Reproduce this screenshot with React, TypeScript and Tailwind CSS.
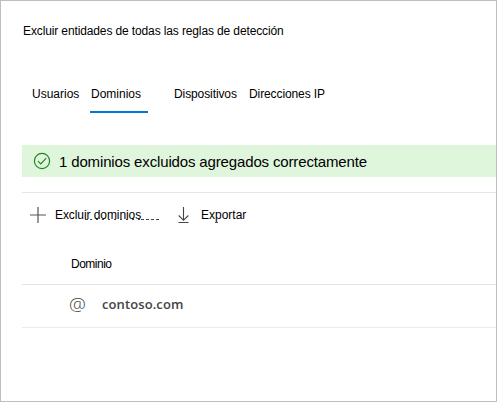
export default function App() {
  return (
    <main className="flex h-[402px] w-[497px] flex-col border border-[#bebebe] bg-white pl-[21px] font-['Liberation_Sans',Arial,sans-serif] text-[12px] leading-4 text-black">
      <h1 className="mt-[22px] h-4 whitespace-nowrap pl-px tracking-[-0.125px]">Excluir entidades de todas las reglas de detección</h1>

      <nav className="mt-[47px] flex h-[27px] whitespace-nowrap">
        <a className="ml-[10px] w-[58px]">Usuarios</a>
        <a className="w-[58px] border-b-2 border-[#0078d4] pl-px">Dominios</a>
        <a className="ml-[26px] w-[75px] tracking-[-0.1px]">Dispositivos</a>
        <a className="tracking-[-0.1px]">Direcciones IP</a>
      </nav>

      <div className="mt-8 flex h-8 shrink-0 items-center bg-[#dff6dd] pl-[11px] text-[15px]">
        <svg className="mr-[8px] size-[18px]" viewBox="0 0 18 18" fill="none" stroke="#218721" strokeWidth="1.2">
          <circle cx="9" cy="9" r="7.6" />
          <path d="M5 9.2 7.8 12 13.2 6.2" />
        </svg>
        <span className="whitespace-nowrap pt-px tracking-[-0.145px]">1 dominios excluidos agregados correctamente</span>
      </div>

      <div className="mt-[15px] flex h-[46px] shrink-0 items-center border-t border-[#e5e5e5] pb-0.5 pl-2">
        <svg className="mr-[9px] size-4" viewBox="0 0 16 16" fill="none" stroke="#555" strokeWidth="1.2">
          <path d="M0 8h16M8 0v16" />
        </svg>
        <span className="relative w-[123px] whitespace-nowrap tracking-[-0.08px]">
          Excluir dominios
          <svg className="absolute left-0 top-0 h-4 w-[108px]" viewBox="0 0 108 16" stroke="#444">
            <path d="M30 12.5h5M86 12.5h19" strokeDasharray="3 2" />
            <path d="M35 12.5h50" strokeDasharray="2 4" />
          </svg>
        </span>
        <svg className="mr-3 h-4 w-[11px]" viewBox="0 0 11 16" fill="none" stroke="#444" strokeWidth="1.1">
          <path d="M5.5 0v13M.7 8.5l4.8 4.8 4.8-4.8M.5 15.5h10" />
        </svg>
        <span className="relative">
          Exportar
          <i className="absolute bottom-0 left-[14px] h-px w-[3px] bg-[#555]" />
        </span>
      </div>

      <div className="flex h-[47px] shrink-0 items-center border-b border-[#e5e5e5] pl-[49px] pt-1.5 text-[12px] tracking-[-0.5px]">Dominio</div>
      <div className="flex h-[43px] shrink-0 items-center border-b border-[#ebebeb] pb-1 pl-[47px] text-[#444]">
        <span className="w-[33px] font-['Open_Sans',sans-serif] text-[19px] font-light">@</span>
        <span className="font-['Open_Sans',sans-serif] text-[13px] font-semibold tracking-[0.1px]">contoso.com</span>
      </div>
    </main>
  );
}
